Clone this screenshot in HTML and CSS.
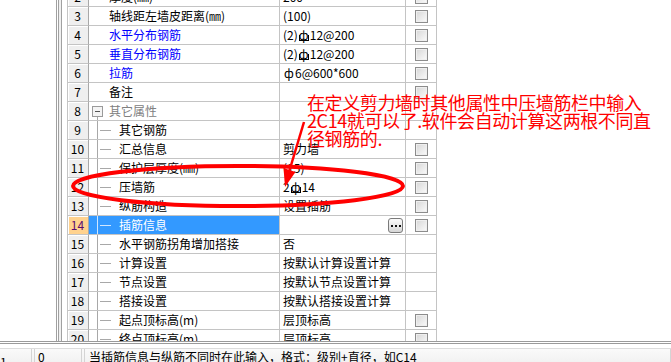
FILE: index.html
```html
<!DOCTYPE html>
<html lang="zh-CN">
<head>
    <meta charset="UTF-8">
    <title>属性编辑</title>
    <link rel="stylesheet" href="styles.css">
</head>
<body>
<div class="app">
    <div class="main">
        <div class="side"></div>
        <div class="split"></div>
        <div class="gridpane">
            <div class="grid">
                <div class="row"><div class="num">2</div><div class="name">厚度(㎜)</div><div class="val">200</div><div class="chk"><i class="box"></i></div></div>
                <div class="row"><div class="num">3</div><div class="name">轴线距左墙皮距离(㎜)</div><div class="val">(100)</div><div class="chk"><i class="box"></i></div></div>
                <div class="row"><div class="num">4</div><div class="name blue">水平分布钢筋</div><div class="val">(2)<span class="g hrb">ф</span>12@200</div><div class="chk"><i class="box"></i></div></div>
                <div class="row"><div class="num">5</div><div class="name blue">垂直分布钢筋</div><div class="val">(2)<span class="g hrb">ф</span>12@200</div><div class="chk"><i class="box"></i></div></div>
                <div class="row"><div class="num">6</div><div class="name blue">拉筋</div><div class="val"><span class="g">ф</span>6@600*600</div><div class="chk"><i class="box"></i></div></div>
                <div class="row"><div class="num">7</div><div class="name">备注</div><div class="val"></div><div class="chk"><i class="box"></i></div></div>
                <div class="row"><div class="num">8</div><div class="name group"><i class="minus"></i>其它属性</div><div class="val"></div><div class="chk"></div></div>
                <div class="row"><div class="num">9</div><div class="name leaf">其它钢筋</div><div class="val"></div><div class="chk"></div></div>
                <div class="row"><div class="num">10</div><div class="name leaf">汇总信息</div><div class="val">剪力墙</div><div class="chk"><i class="box"></i></div></div>
                <div class="row"><div class="num">11</div><div class="name leaf">保护层厚度(㎜)</div><div class="val">(15)</div><div class="chk"><i class="box"></i></div></div>
                <div class="row"><div class="num">12</div><div class="name leaf">压墙筋</div><div class="val">2<span class="g hrb">ф</span>14</div><div class="chk"><i class="box"></i></div></div>
                <div class="row"><div class="num">13</div><div class="name leaf">纵筋构造</div><div class="val">设置插筋</div><div class="chk"><i class="box"></i></div></div>
                <div class="row sel"><div class="num">14</div><div class="name leaf">插筋信息</div><div class="val"><span></span><b class="more"></b></div><div class="chk"><i class="box"></i></div></div>
                <div class="row"><div class="num">15</div><div class="name leaf">水平钢筋拐角增加搭接</div><div class="val">否</div><div class="chk"></div></div>
                <div class="row"><div class="num">16</div><div class="name leaf">计算设置</div><div class="val">按默认计算设置计算</div><div class="chk"></div></div>
                <div class="row"><div class="num">17</div><div class="name leaf">节点设置</div><div class="val">按默认节点设置计算</div><div class="chk"></div></div>
                <div class="row"><div class="num">18</div><div class="name leaf">搭接设置</div><div class="val">按默认搭接设置计算</div><div class="chk"></div></div>
                <div class="row"><div class="num">19</div><div class="name leaf">起点顶标高(m)</div><div class="val">层顶标高</div><div class="chk"><i class="box"></i></div></div>
                <div class="row"><div class="num">20</div><div class="name leaf">终点顶标高(m)</div><div class="val">层顶标高</div><div class="chk"><i class="box"></i></div></div>
            </div>
        </div>
    </div>
    <div class="gap"></div>
    <div class="status">
        <div class="cell c1">1</div>
        <div class="cell c2">0</div>
        <div class="cell c3">当插筋信息与纵筋不同时在此输入，格式：级别+直径，如C14</div>
    </div>

    <!-- 标注：红圈和箭头 -->
    <svg class="marks" width="671" height="362" viewBox="0 0 671 362">
        <ellipse cx="238" cy="186" rx="165" ry="20" fill="none" stroke="#f00" stroke-width="4"/>
        <line x1="304" y1="122" x2="289" y2="172" stroke="#f00" stroke-width="2.5"/>
        <polygon points="285,187 283.5,168 295.5,172" fill="#f00"/>
    </svg>
    <div class="note">在定义剪力墙时其他属性中压墙筋栏中输入<br>2C14就可以了.软件会自动计算这两根不同直<br>径钢筋的.</div>
</div>
</body>
</html>
```

FILE: styles.css
```css
*{
    box-sizing: border-box;
}
body{
    margin: 0;
    width: 671px;
    height: 362px;
    overflow: hidden;
    background-color: #fff;
    font: 12px "Noto Sans CJK SC", "Liberation Sans", sans-serif;
    color: #000;
}
.app{
    position: relative;
    width: 671px;
    height: 362px;
}
.main{
    display: flex;
    height: 344px;
    border-bottom: 3px double #9a9a9a;
}
.side{
    width: 59px;
    background-color: #fff;
    border-right: 3px double #a0a0a0;
}
.split{
    width: 2px;
    background-color: #f0f0f0;
}
.gridpane{
    flex: 1;
    border-left: 1px solid #a0a0a0;
    padding-left: 5px;
    overflow: hidden;
}
.grid{
    margin-top: -12px;
}
.row{
    display: grid;
    grid-template-columns: 22px 191px 126px 31px;
    height: 19px;
    line-height: 18px;
}
.row > div{
    border-bottom: 1px solid #c4c4c4;
    border-right: 1px solid #c4c4c4;
    white-space: nowrap;
    overflow: hidden;
}
.num{
    background-color: #efefef;
    box-shadow: inset 1px 1px #fff;
    border-left: 1px solid #c4c4c4;
    text-align: center;
    padding-right: 1px;
    border-right-color: #a8a8a8 !important;
}
.name{
    position: relative;
    padding-left: 20px;
}
.name.blue{
    color: #0000ff;
}
.name.group{
    color: #808080;
}
.minus{
    position: absolute;
    left: 3px;
    top: 4px;
    width: 11px;
    height: 11px;
    border: 1px solid #9a9a9a;
    background-color: #f4f4f4;
}
.minus::before{
    content: "";
    position: absolute;
    left: 2px;
    top: 4px;
    width: 5px;
    height: 1px;
    background-color: #555;
}
.group::after{
    content: "";
    position: absolute;
    left: 8px;
    top: 15px;
    bottom: -1px;
    width: 1px;
    background-color: #a8a8a8;
}
.name.leaf{
    padding-left: 30px;
}
.leaf::before{
    content: "";
    position: absolute;
    left: 8px;
    top: 0;
    bottom: -1px;
    width: 1px;
    background-color: #a8a8a8;
}
.leaf::after{
    content: "";
    position: absolute;
    left: 11px;
    top: 9px;
    width: 11px;
    height: 1px;
    background-color: #a8a8a8;
}
.val{
    padding-left: 3px;
    display: flex;
    align-items: center;
    justify-content: flex-start;
}
.g{
    display: inline-block;
    position: relative;
    width: 12px;
    text-align: center;
}
.hrb::after{
    content: "";
    position: absolute;
    left: 1px;
    right: 1px;
    top: 9px;
    height: 5px;
    border: 1px solid #000;
    border-top: none;
}
.chk{
    padding: 3px 0 0 9px;
}
.box{
    display: block;
    width: 13px;
    height: 13px;
    border: 1px solid #8c8c8c;
    background: linear-gradient(135deg, #d6d6d6, #fbfbfb);
    box-shadow: inset 0 0 0 1px #efefef;
}
.sel .num{
    background-color: #ffd28e;
    color: #5c0a6e;
}
.sel .name{
    background-color: #3399ff;
    color: #fff;
}
.sel .leaf::before,
.sel .leaf::after{
    background-color: #cfe6ff;
}
.sel .val{
    justify-content: space-between;
}
.more{
    position: relative;
    width: 15px;
    height: 15px;
    margin-right: 2px;
    border: 1px solid #7a7a7a;
    border-radius: 3px;
    background: linear-gradient(#fbfbfb, #d6d6d6);
}
.more::before{
    content: "";
    position: absolute;
    left: 2px;
    top: 6px;
    width: 2px;
    height: 2px;
    background-color: #111;
    box-shadow: 4px 0 #111, 8px 0 #111;
}
.gap{
    height: 4px;
}
.status{
    display: flex;
    height: 14px;
    border-top: 1px solid #dcdcdc;
    background: linear-gradient(#fafafa, #f2f2f2);
    gap: 2px;
    line-height: 15px;
}
.cell{
    border-left: 1px solid #d4d4d4;
    border-right: 1px solid #d4d4d4;
    padding-left: 3px;
    white-space: nowrap;
}
.c1{
    width: 32px;
    border-left: none;
    padding-top: 5px;
    padding-left: 0;
}
.c2{
    width: 48px;
}
.c3{
    flex: 1;
    padding-left: 4px;
}
.marks{
    position: absolute;
    left: 0;
    top: 0;
    pointer-events: none;
}
.note{
    position: absolute;
    left: 307px;
    top: 93px;
    color: #ff0000;
    font-size: 18px;
    line-height: 18px;
    letter-spacing: -0.4px;
    white-space: nowrap;
}
```
